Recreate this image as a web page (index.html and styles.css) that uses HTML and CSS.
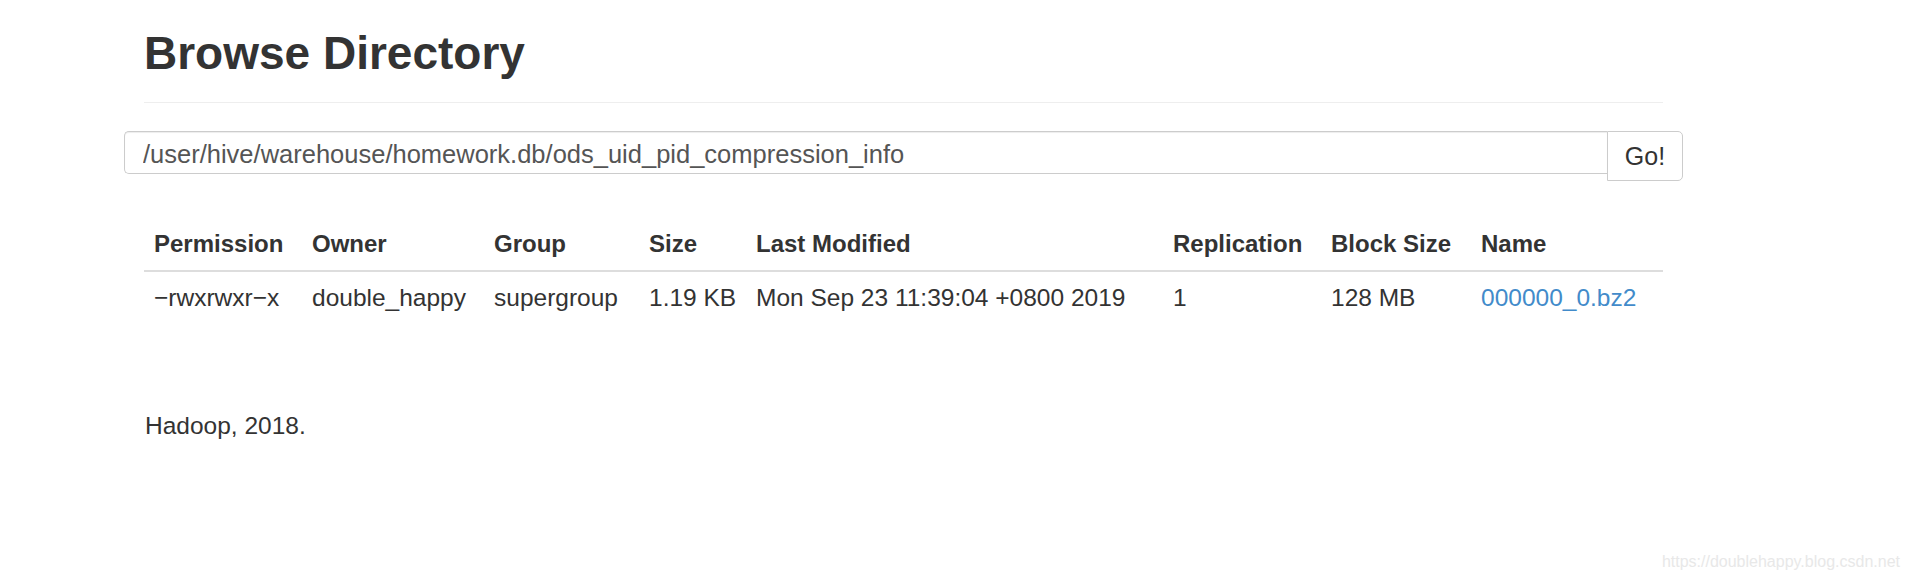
FILE: index.html
```html
<!DOCTYPE html>
<html>
<head>
<meta charset="utf-8">
<title>Browsing HDFS</title>
<link rel="stylesheet" href="styles.css">
</head>
<body>
<div class="container">
  <div class="page-header">
    <h1>Browse Directory</h1>
  </div>
  <div class="row">
    <form class="input-group">
      <input class="form-control" type="text" value="/user/hive/warehouse/homework.db/ods_uid_pid_compression_info">
      <button class="btn" type="button">Go!</button>
    </form>
  </div>
  <table class="table">
    <colgroup>
      <col class="c-perm"><col class="c-owner"><col class="c-group"><col class="c-size">
      <col class="c-mod"><col class="c-repl"><col class="c-block"><col class="c-name">
    </colgroup>
    <thead>
      <tr>
        <th>Permission</th><th>Owner</th><th>Group</th><th>Size</th>
        <th>Last Modified</th><th>Replication</th><th>Block Size</th><th>Name</th>
      </tr>
    </thead>
    <tbody>
      <tr>
        <td>−rwxrwxr−x</td><td>double_happy</td><td>supergroup</td><td>1.19 KB</td>
        <td>Mon Sep 23 11:39:04 +0800 2019</td><td>1</td><td>128 MB</td>
        <td><a class="file-link" href="#">000000_0.bz2</a></td>
      </tr>
    </tbody>
  </table>
  <div class="footer">Hadoop, 2018.</div>
</div>
<div class="watermark">https://doublehappy.blog.csdn.net</div>
</body>
</html>
```

FILE: styles.css
```css
html, body {
  margin: 0;
  padding: 0;
  background: #fff;
}
body {
  font-family: "Liberation Sans", Arial, sans-serif;
  font-size: 24.5px;
  line-height: 34px;
  color: #333;
  position: relative;
  width: 1910px;
  height: 580px;
  overflow: hidden;
}
.container {
  width: 1519px;
  margin-left: 144px;
}
.page-header {
  padding-top: 27px;
  padding-bottom: 22px;
  border-bottom: 1px solid #eee;
}
.page-header h1 {
  margin: 0;
  font-size: 46px;
  line-height: 53px;
  font-weight: bold;
  color: #333;
}
.row {
  margin: 28px -20px 0 -20px;
}
.input-group {
  display: flex;
  align-items: flex-start;
  margin: 0;
}
.form-control {
  flex: 1;
  box-sizing: border-box;
  height: 43px;
  margin: 0;
  padding: 3px 18px 0 18px;
  font-family: "Liberation Sans", Arial, sans-serif;
  font-size: 25.5px;
  color: #555;
  border: 1px solid #ccc;
  border-right: 0;
  border-radius: 5px 0 0 5px;
  box-shadow: inset 0 1px 1px rgba(0,0,0,.075);
  outline: none;
  background: #fff;
}
.btn {
  box-sizing: border-box;
  width: 76px;
  height: 50px;
  margin: 0;
  padding: 0;
  font-family: "Liberation Sans", Arial, sans-serif;
  font-size: 25px;
  color: #333;
  background: #fff;
  border: 1px solid #ccc;
  border-radius: 0 5px 5px 0;
}
.table {
  width: 100%;
  margin-top: 37px;
  border-collapse: collapse;
  border-spacing: 0;
  table-layout: fixed;
}
.c-perm { width: 158px; }
.c-owner { width: 182px; }
.c-group { width: 155px; }
.c-size { width: 107px; }
.c-mod { width: 417px; }
.c-repl { width: 158px; }
.c-block { width: 150px; }
.c-name { width: 192px; }
.table th,
.table td {
  padding: 9px 10px;
  text-align: left;
  vertical-align: bottom;
  white-space: nowrap;
  line-height: 34px;
}
.table th {
  font-size: 24px;
  font-weight: bold;
  border-bottom: 2px solid #ddd;
}
.file-link {
  color: #428bca;
  text-decoration: none;
}
.footer {
  margin-top: 85px;
  padding-left: 1px;
}
.watermark {
  position: absolute;
  right: 10px;
  bottom: 9px;
  font-size: 16px;
  line-height: 18px;
  color: #e8e8e8;
}
```
